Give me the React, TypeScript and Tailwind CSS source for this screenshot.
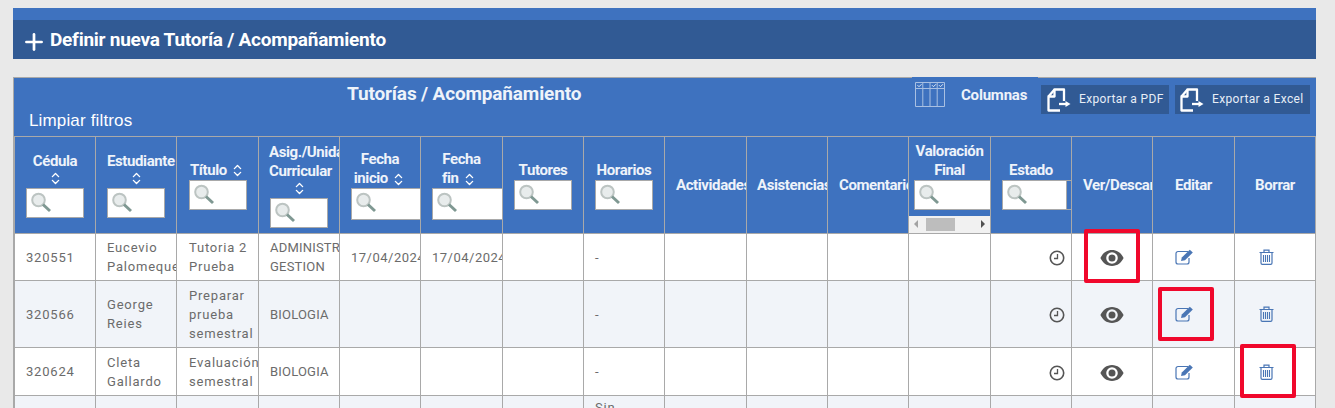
import React from 'react';
import { Plus, ChevronsUpDown } from 'lucide-react';

const SearchIcon = () => (
    <svg width="21" height="21" viewBox="0 0 21 21" className="absolute left-[4px] top-[3px]">
        <circle cx="7.500" cy="8" r="6.300" fill="#e8ecec" stroke="#bcc4c2" strokeWidth="2" />
        <path d="M12 12.500 L19 19" stroke="#7f9892" strokeWidth="3" />
    </svg>
);

const FilterBox = ({ className = 'w-[58px] h-[30px]' }: { className?: string }) => (
    <div className={`relative bg-white border border-[#a9a9a9] ${className}`}>
        <SearchIcon />
    </div>
);

const Sort = () => <ChevronsUpDown size={15} strokeWidth={2.200} className="inline-block text-white" />;

const EyeIcon = () => (
    <svg width="24" height="16" viewBox="0 0 24 16" className="inline-block">
        <path fillRule="evenodd" fill="#555" d="M12 0C6.500 0 2.400 3.600 0.400 8 2.400 12.400 6.500 16 12 16s9.600-3.600 11.600-8C21.600 3.600 17.500 0 12 0zm0 2.200a5.800 5.800 0 1 1 0 11.600 5.800 5.800 0 0 1 0-11.600zm0 2.300a3.500 3.500 0 1 0 0 7 3.500 3.500 0 0 0 0-7z" />
    </svg>
);

const EditIcon = () => (
    <svg width="19" height="16" viewBox="0 0 19 16" className="block">
        <path d="M13 2.500H3a2 2 0 0 0-2 2v8.500a2 2 0 0 0 2 2h9a2 2 0 0 0 2-2V9" fill="none" stroke="#4a76b5" strokeWidth="1.200" />
        <path d="M6 12l.8-3.500L14.800.8l3 2.800-7.800 7.600z" fill="#4a76b5" />
    </svg>
);

const TrashIcon = () => (
    <svg width="15" height="16" viewBox="0 0 15 16" className="block">
        <path d="M0.500 3.500h14M5 3.500V1.200h5v2.300M2 3.500v10.500a1.300 1.300 0 0 0 1.300 1.300h8.400a1.300 1.300 0 0 0 1.300-1.300V3.500" fill="none" stroke="#4a76b5" strokeWidth="1.200" />
        <path d="M4.500 6v7M6.500 6v7M8.500 6v7M10.500 6v7" stroke="#4a76b5" strokeWidth="1.100" />
    </svg>
);

const ClockIcon = () => (
    <svg width="16" height="16" viewBox="0 0 16 16" className="inline-block">
        <circle cx="8" cy="8" r="6.700" fill="none" stroke="#555" strokeWidth="1.600" />
        <path d="M8.500 4v4.500H5" fill="none" stroke="#555" strokeWidth="1.300" />
    </svg>
);

const DocIcon = () => (
    <svg width="24" height="24" viewBox="0 0 24 24" className="shrink-0">
        <path d="M17 13V1.500H7.500V8.500H1.500V22.500H13" fill="none" stroke="#fff" strokeWidth="2.300" strokeLinejoin="round" />
        <path d="M1.500 8.500L7.500 1.500" stroke="#fff" strokeWidth="2.300" />
        <path d="M12 16h7" stroke="#fff" strokeWidth="2.300" />
        <path d="M18.500 13l5 3-5 3z" fill="#fff" />
    </svg>
);

const ColumnsIcon = () => (
    <svg width="30" height="25" viewBox="0 0 30 25">
        <path d="M.5.500h29v24H.5zM.5 6.500h29M7.800.5v24M15 .5v24M22.200.5v24" fill="none" stroke="#a9c0e2" strokeWidth="1" />
        <path d="M2.500 3.200l1.500 1.500 2.500-2.500M17 3.200l1.500 1.500 2.500-2.500M24 3.200l1.500 1.500 2.500-2.500" fill="none" stroke="#dfe8f5" strokeWidth="1" />
    </svg>
);

const widths = [81, 81, 82, 81, 81, 82, 81, 81, 82, 81, 81, 82, 81, 81, 82, 81];

const rows = [
    { id: '320551', name: ['Eucevio', 'Palomeque'], title: ['Tutoria 2', 'Prueba'], subject: ['ADMINISTR', 'GESTION'], from: '17/04/2024', to: '17/04/2024', h: 'h-[47px]', bg: 'bg-white' },
    { id: '320566', name: ['George', 'Reies'], title: ['Preparar', 'prueba', 'semestral'], subject: ['BIOLOGIA'], from: '', to: '', h: 'h-[67px]', bg: 'bg-[#f1f4f9]' },
    { id: '320624', name: ['Cleta', 'Gallardo'], title: ['Evaluación', 'semestral'], subject: ['BIOLOGIA'], from: '', to: '', h: 'h-[48px]', bg: 'bg-white' },
];

const Lines = ({ lines }: { lines: string[] }) => (
    <>
        {lines.map((l) => (
            <div key={l} className="whitespace-nowrap">{l}</div>
        ))}
    </>
);

const Th = ({ children }: { children?: React.ReactNode }) => (
    <th className="border border-[#a9a9a9] p-0 align-middle overflow-hidden font-bold text-[15px] leading-[19px] tracking-[-0.4px] text-[#eef3fa]">
        <div className="flex flex-col items-center justify-center w-full overflow-hidden">{children}</div>
    </th>
);

const Td = ({ children, className = 'pl-[11px]' }: { children?: React.ReactNode; className?: string }) => (
    <td className={`border border-[#a9a9a9] p-0 overflow-hidden align-middle ${className}`}>{children}</td>
);

export default function App() {
    return (
        <div className="w-[1335px] h-[408px] overflow-hidden bg-[#e9e9e9] font-['Roboto',sans-serif]">
            <div className="pt-[8px] pl-[13px] w-[1316px]">
                <div className="h-[12px] bg-[#3e72bf]" />
                <div className="h-[39px] bg-[#315a94] flex items-center pl-[8px] gap-[3px] text-white">
                    <Plus size={26} strokeWidth={2.500} className="mt-[4px]" />
                    <span className="mt-[2px] font-bold text-[19px] tracking-[-0.25px]">Definir nueva Tutoría / Acompañamiento</span>
                </div>
            </div>
            <div className="mt-[18px] ml-[13px] w-[1303px] bg-[#3e72bf] border-t border-l border-[#a9a9a9]">
                <div className="relative h-[58px]">
                    <div className="absolute left-[898px] top-[-1px] w-[126px] h-px bg-[#3e72bf]" />
                    <div className="absolute left-[333px] top-[2px] font-bold text-[19px] tracking-[-0.15px] text-[#eef3fa]">Tutorías / Acompañamiento</div>
                    <div className="absolute left-[15px] top-[30px] font-['Liberation_Sans',sans-serif] text-[17px] tracking-[0.15px] text-white">Limpiar filtros</div>
                    <div className="absolute left-[901px] top-[4px]"><ColumnsIcon /></div>
                    <div className="absolute left-[947px] top-[6px] font-bold text-[15px] tracking-[-0.2px] text-[#eef3fa]">Columnas</div>
                    <div className="absolute left-[1027px] top-[7px] flex gap-[6px]">
                        <div className="flex items-center gap-[8px] h-[29px] w-[128px] pl-[6px] bg-[#315a94] text-[12px] tracking-[0.35px] text-[#e8eef7]"><DocIcon /><span className="-mt-[2px]">Exportar a PDF</span></div>
                        <div className="flex items-center gap-[8px] h-[29px] w-[135px] pl-[5px] bg-[#315a94] text-[12px] tracking-[0.35px] text-[#e8eef7]"><DocIcon /><span className="-mt-[2px]">Exportar a Excel</span></div>
                    </div>
                </div>
                <table className="table-fixed border-collapse w-[1302px] text-[13px] leading-[19px] tracking-[0.8px] text-[#6b6b6b]">
                    <colgroup>
                        {widths.map((w, i) => <col key={i} style={{ width: w }} />)}
                    </colgroup>
                    <thead>
                        <tr className="h-[97px]">
                            <Th><span>Cédula</span><Sort /><div className="mt-[2px]"><FilterBox /></div></Th>
                            <Th><span className="self-start ml-[11px] whitespace-nowrap">Estudiante</span><Sort /><div className="mt-[2px]"><FilterBox /></div></Th>
                            <Th><span className="whitespace-nowrap">Título <Sort /></span><FilterBox /></Th>
                            <Th>
                                <div className="w-full pl-[10px] text-left whitespace-nowrap">Asig./Unidad</div>
                                <div className="w-full pl-[10px] text-left whitespace-nowrap">Curricular</div>
                                <Sort />
                                <div className="mt-[2px]"><FilterBox /></div>
                            </Th>
                            <Th><span>Fecha</span><span className="whitespace-nowrap">inicio <Sort /></span><div className="self-start ml-[11px]"><FilterBox className="w-[72px] h-[32px]" /></div></Th>
                            <Th><span>Fecha</span><span className="-ml-[4px] whitespace-nowrap">fin <Sort /></span><div className="self-start ml-[11px]"><FilterBox className="w-[72px] h-[32px]" /></div></Th>
                            <Th><span>Tutores</span><FilterBox /></Th>
                            <Th><span>Horarios</span><FilterBox /></Th>
                            <Th><span className="self-start ml-[11px] whitespace-nowrap">Actividades</span></Th>
                            <Th><span className="self-start ml-[10px] whitespace-nowrap">Asistencias</span></Th>
                            <Th><span className="self-start ml-[11px] whitespace-nowrap">Comentarios</span></Th>
                            <Th>
                                <span className="mt-[4px]">Valoración</span>
                                <span>Final</span>
                                <div className="self-start ml-[5px]"><FilterBox className="w-[78px] h-[30px]" /></div>
                                <div className="mt-[6px] h-[17px] w-full bg-[#f1f1f1] flex items-center justify-between px-[5px]">
                                    <span className="w-0 h-0 border-y-[4px] border-y-transparent border-r-[4px] border-r-[#a3a3a3]" />
                                    <span className="w-[29px] h-[13px] bg-[#bdbdbd] mr-[18px]" />
                                    <span className="w-0 h-0 border-y-[4px] border-y-transparent border-l-[4px] border-l-[#505050]" />
                                </div>
                            </Th>
                            <Th>
                                <span>Estado</span>
                                <div className="self-start ml-[11px] w-[70px] border-y border-[#a9a9a9]">
                                    <FilterBox className="w-[65px] h-[30px] -my-px" />
                                </div>
                            </Th>
                            <Th><span className="self-start ml-[11px] whitespace-nowrap">Ver/Descargar</span></Th>
                            <Th>Editar</Th>
                            <Th>Borrar</Th>
                        </tr>
                    </thead>
                    <tbody>
                        {rows.map((r) => (
                            <tr key={r.id} className={`${r.h} ${r.bg}`}>
                                <Td>{r.id}</Td>
                                <Td><Lines lines={r.name} /></Td>
                                <Td className="pl-[12px]"><Lines lines={r.title} /></Td>
                                <Td className="pl-[11px] tracking-[0.2px]"><Lines lines={r.subject} /></Td>
                                <Td className="pl-[11px] tracking-[0.5px]"><span className="whitespace-nowrap">{r.from}</span></Td>
                                <Td className="pl-[11px] tracking-[0.5px]"><span className="whitespace-nowrap">{r.to}</span></Td>
                                <Td />
                                <Td>-</Td>
                                <Td />
                                <Td />
                                <Td />
                                <Td />
                                <td className="border border-[#a9a9a9] pr-[6px] text-right align-middle"><ClockIcon /></td>
                                <td className="relative border border-[#a9a9a9] text-center align-middle">
                                    <EyeIcon />
                                    {r.id === '320551' && <div className="absolute left-[12px] top-[-5px] w-[56px] h-[54px] rounded-[2px] border-[4px] border-[#f0082c]" />}
                                </td>
                                <td className="relative border border-[#a9a9a9] pl-[22px] align-middle">
                                    <EditIcon />
                                    {r.id === '320566' && <div className="absolute left-[5px] top-[6px] w-[56px] h-[54px] rounded-[2px] border-[4px] border-[#f0082c]" />}
                                </td>
                                <td className="relative border border-[#a9a9a9] pl-[24px] align-middle">
                                    <TrashIcon />
                                    {r.id === '320624' && <div className="absolute left-[5px] top-[-4px] w-[56px] h-[54px] rounded-[2px] border-[4px] border-[#f0082c]" />}
                                </td>
                            </tr>
                        ))}
                        <tr className="h-[40px] bg-[#f1f4f9]">
                            {widths.map((_, i) => (
                                <Td key={i} className="pl-[11px] align-top">{i === 7 ? <div className="pt-[2px]">Sin</div> : null}</Td>
                            ))}
                        </tr>
                    </tbody>
                </table>
            </div>
        </div>
    );
}
